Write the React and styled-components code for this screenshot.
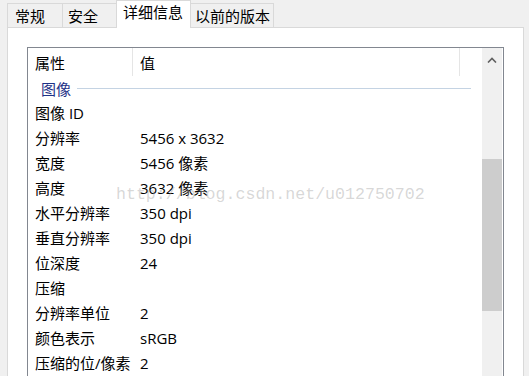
import React from "react";
import styled, { createGlobalStyle } from "styled-components";

const Global = createGlobalStyle`
  html, body { margin: 0; padding: 0; background: #f0f0f0; overflow: hidden; }
  body { font-family: "Open Sans", "Noto Sans CJK SC", sans-serif; }
`;

const Window = styled.div`
  position: relative;
  width: 529px;
  height: 376px;
  overflow: hidden;
  background: #f0f0f0;
  font-size: 15px;
  color: #000;
`;

const TabStrip = styled.div`
  display: flex;
  align-items: flex-end;
  height: 27px;
  padding-left: 7px;
  position: relative;
  z-index: 2;
`;

const Tab = styled.div`
  box-sizing: border-box;
  width: ${(p) => p.$w}px;
  height: ${(p) => (p.$active ? 28 : 24)}px;
  margin-bottom: ${(p) => (p.$active ? -1 : 0)}px;
  margin-left: -1px;
  padding-left: ${(p) => p.$pl}px;
  padding-top: ${(p) => (p.$active ? 1 : 2)}px;
  border: 1px solid #d9d9d9;
  border-bottom: none;
  background: ${(p) => (p.$active ? "#ffffff" : "#f0f0f0")};
  line-height: 20px;
  white-space: nowrap;
  position: relative;
  z-index: ${(p) => (p.$active ? 2 : 1)};
  &:first-child { margin-left: 0; }
`;

const Panel = styled.div`
  box-sizing: border-box;
  width: 517px;
  height: 360px;
  margin-left: 7px;
  border: 1px solid #d9d9d9;
  background: #fff;
  padding: 19px 19px 0 19px;
`;

const ListBox = styled.div`
  box-sizing: border-box;
  height: 340px;
  border: 1px solid #828790;
  border-bottom: none;
  display: flex;
  background: #fff;
`;

const ListContent = styled.div`
  flex: 1;
  min-width: 0;
  display: flex;
  flex-direction: column;
`;

const Header = styled.div`
  display: flex;
  height: 28px;
  align-items: stretch;
`;

const HeaderCell = styled.div`
  box-sizing: border-box;
  width: ${(p) => (p.$w ? `${p.$w}px` : "auto")};
  flex: ${(p) => (p.$w ? "none" : "1")};
  padding-left: 7px;
  display: flex;
  align-items: center;
  border-right: ${(p) => (p.$sep ? "1px solid #e5e5e5" : "none")};
`;

const GroupRow = styled.div`
  display: flex;
  align-items: center;
  height: 24px;
  padding-left: 13px;
  padding-right: 11px;
  gap: 6px;
`;

const GroupLabel = styled.span`
  color: #1e3287;
`;

const GroupLine = styled.div`
  flex: 1;
  height: 1px;
  background: #c4d3e3;
  margin-top: 1px;
`;

const Row = styled.div`
  display: flex;
  height: 25px;
  align-items: center;
  white-space: nowrap;
`;

const Label = styled.div`
  box-sizing: border-box;
  width: 105px;
  padding-left: 7px;
`;

const Value = styled.div`
  padding-left: 7px;
`;

const ScrollBar = styled.div`
  width: 20px;
  margin-right: 1px;
  background: #f0f0f0;
  display: flex;
  flex-direction: column;
  align-items: stretch;
`;

const ArrowBtn = styled.div`
  height: 24px;
  display: flex;
  align-items: center;
  justify-content: center;
`;

const Thumb = styled.div`
  margin-top: 87px;
  height: 152px;
  background: #cdcdcd;
`;

const Watermark = styled.div`
  position: absolute;
  left: 116px;
  top: 185px;
  font-family: "Liberation Mono", monospace;
  font-size: 16.6px;
  line-height: 20px;
  color: rgba(160, 160, 160, 0.42);
  pointer-events: none;
  white-space: nowrap;
  z-index: 5;
`;

const tabs = [
  { t: "常规", w: 56, pl: 7 },
  { t: "安全", w: 55, pl: 5 },
  { t: "详细信息", w: 75, pl: 6, active: true },
  { t: "以前的版本", w: 84, pl: 4 },
];

const rows = [
  ["图像 ID", ""],
  ["分辨率", "5456 x 3632"],
  ["宽度", "5456 像素"],
  ["高度", "3632 像素"],
  ["水平分辨率", "350 dpi"],
  ["垂直分辨率", "350 dpi"],
  ["位深度", "24"],
  ["压缩", ""],
  ["分辨率单位", "2"],
  ["颜色表示", "sRGB"],
  ["压缩的位/像素", "2"],
];

export default function App() {
  return (
    <Window>
      <Global />
      <TabStrip>
        {tabs.map((tb) => (
          <Tab key={tb.t} $w={tb.w} $pl={tb.pl} $active={tb.active}>
            {tb.t}
          </Tab>
        ))}
      </TabStrip>
      <Panel>
        <ListBox>
          <ListContent>
            <Header>
              <HeaderCell $w={105} $sep>属性</HeaderCell>
              <HeaderCell $w={327} $sep>值</HeaderCell>
              <HeaderCell />
            </Header>
            <GroupRow>
              <GroupLabel>图像</GroupLabel>
              <GroupLine />
            </GroupRow>
            {rows.map(([k, v]) => (
              <Row key={k}>
                <Label>{k}</Label>
                <Value>{v}</Value>
              </Row>
            ))}
          </ListContent>
          <ScrollBar>
            <ArrowBtn>
              <svg width="10" height="6" viewBox="0 0 10 6">
                <path d="M1 5.5 L5 1.5 L9 5.5" fill="none" stroke="#606060" strokeWidth="1.6" />
              </svg>
            </ArrowBtn>
            <Thumb />
          </ScrollBar>
        </ListBox>
      </Panel>
      <Watermark>http://blog.csdn.net/u012750702</Watermark>
    </Window>
  );
}
